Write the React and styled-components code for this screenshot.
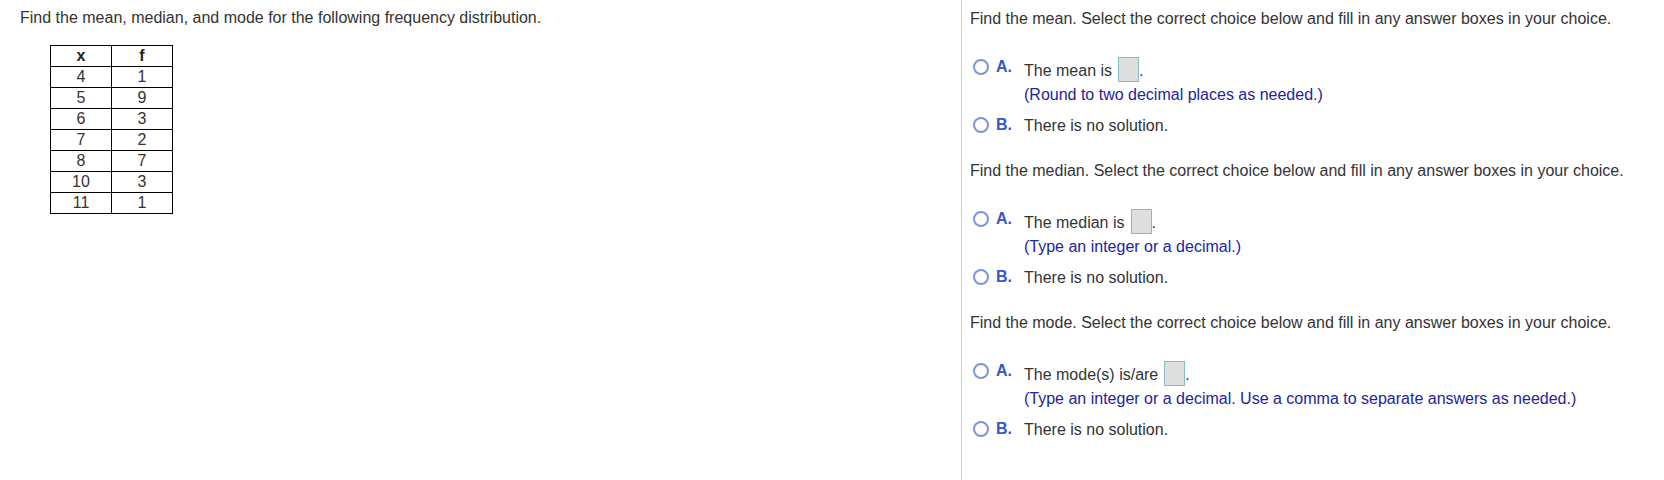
import styled, { createGlobalStyle } from "styled-components";

const GlobalStyle = createGlobalStyle`
  body {
    margin: 0;
    background: #fff;
    font-family: "Liberation Sans", Arial, sans-serif;
    color: #333;
  }
`;

const Page = styled.div`
  display: flex;
  min-height: 480px;
`;

const LeftPane = styled.div`
  width: 941px;
  padding: 10px 0 0 20px;
`;

const RightPane = styled.div`
  flex: 1;
  border-left: 1px solid #c9d0de;
  padding: 11px 0 0 8px;
`;

const Text = styled.div`
  font-size: 16px;
  line-height: 16px;
`;

const Table = styled.table`
  border-collapse: collapse;
  margin: 19px 0 0 30px;
  font-size: 16px;
`;

const Cell = styled.td`
  border: 1px solid #000;
  width: 60px;
  height: 20px;
  padding: 0;
  text-align: center;
  line-height: 20px;
  font-weight: ${(p) => (p.$head ? 700 : 400)};
  color: ${(p) => (p.$head ? "#222" : "#333")};
`;

const Section = styled.div`
  margin-bottom: 29px;
`;

const ChoiceRow = styled.div`
  display: flex;
  align-items: flex-start;
  margin-top: ${(p) => p.$top}px;
`;

const Marker = styled.div`
  display: flex;
  align-items: center;
  width: 54px;
  height: 16px;
  flex-shrink: 0;
  margin-top: ${(p) => p.$shift}px;
`;

const Radio = styled.span`
  width: 12px;
  height: 12px;
  border: 2px solid #7d93dc;
  border-radius: 50%;
  margin: 0 7px 0 3px;
`;

const Letter = styled.span`
  font-size: 16px;
  line-height: 16px;
  font-weight: 700;
  color: #3856c4;
`;

const Body = styled.div`
  font-size: 16px;
  line-height: 16px;
  margin-top: ${(p) => p.$shift || 0}px;
`;

const AnswerBox = styled.span`
  display: inline-block;
  width: 19px;
  height: 23px;
  margin-left: 6px;
  background: #dedede;
  border: 1px solid #8dbac9;
  vertical-align: -6px;
`;

const Hint = styled.div`
  color: #23239e;
  margin-top: 5px;
`;

const rows = [
  [4, 1],
  [5, 9],
  [6, 3],
  [7, 2],
  [8, 7],
  [10, 3],
  [11, 1],
];

const questions = [
  {
    what: "mean",
    lead: "The mean is",
    hint: "(Round to two decimal places as needed.)",
  },
  {
    what: "median",
    lead: "The median is",
    hint: "(Type an integer or a decimal.)",
  },
  {
    what: "mode",
    lead: "The mode(s) is/are",
    hint: "(Type an integer or a decimal. Use a comma to separate answers as needed.)",
  },
];

export default function App() {
  return (
    <>
      <GlobalStyle />
      <Page>
        <LeftPane>
          <Text>
            Find the mean, median, and mode for the following frequency
            distribution.
          </Text>
          <Table>
            <tbody>
              <tr>
                <Cell $head>x</Cell>
                <Cell $head>f</Cell>
              </tr>
              {rows.map(([x, f]) => (
                <tr key={x}>
                  <Cell>{x}</Cell>
                  <Cell>{f}</Cell>
                </tr>
              ))}
            </tbody>
          </Table>
        </LeftPane>
        <RightPane>
          {questions.map((q) => (
            <Section key={q.what}>
              <Text>
                Find the {q.what}. Select the correct choice below and fill in
                any answer boxes in your choice.
              </Text>
              <ChoiceRow $top={30}>
                <Marker $shift={2}>
                  <Radio />
                  <Letter>A.</Letter>
                </Marker>
                <Body>
                  <div>
                    {q.lead}
                    <AnswerBox />.
                  </div>
                  <Hint>{q.hint}</Hint>
                </Body>
              </ChoiceRow>
              <ChoiceRow $top={14}>
                <Marker $shift={0}>
                  <Radio />
                  <Letter>B.</Letter>
                </Marker>
                <Body $shift={1}>There is no solution.</Body>
              </ChoiceRow>
            </Section>
          ))}
        </RightPane>
      </Page>
    </>
  );
}
